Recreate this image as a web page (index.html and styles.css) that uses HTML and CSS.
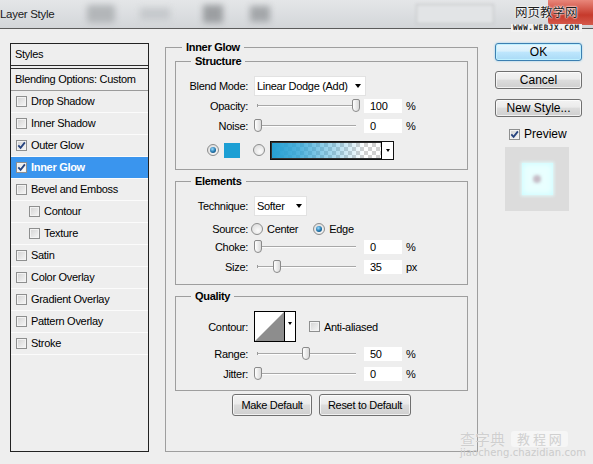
FILE: index.html
```html
<!DOCTYPE html>
<html>
<head>
<meta charset="utf-8">
<title>Layer Style</title>
<link rel="stylesheet" href="styles.css">
</head>
<body>
<div class="titlebar">
  <span class="title">Layer Style</span>
  <span class="blob b1"></span>
  <span class="blob b2"></span>
  <span class="blob b3"></span>
  <span class="blob b4"></span>
  <span class="blob b5"></span>
  <span class="close"></span>
</div>
<div class="wm-top"><span class="wm-cn">网页教学网</span><span class="wm-url">WWW.WEBJX.COM</span></div>

<div class="content">
  <div class="styles-panel">
    <div class="sp-head">Styles</div>
    <div class="sp-blend">Blending Options: Custom</div>
    <div class="sp-row"><span class="cb"></span>Drop Shadow</div>
    <div class="sp-row"><span class="cb"></span>Inner Shadow</div>
    <div class="sp-row"><span class="cb"><svg viewBox="0 0 9 9" width="9" height="9"><path d="M1.3 4.3 L3.6 6.9 L7.9 1.4" stroke="#27447f" stroke-width="1.8" fill="none"/></svg></span>Outer Glow</div>
    <div class="sp-row sel"><span class="cb"><svg viewBox="0 0 9 9" width="9" height="9"><path d="M1.3 4.3 L3.6 6.9 L7.9 1.4" stroke="#27447f" stroke-width="1.8" fill="none"/></svg></span>Inner Glow</div>
    <div class="sp-row"><span class="cb"></span>Bevel and Emboss</div>
    <div class="sp-row sub"><span class="cb"></span>Contour</div>
    <div class="sp-row sub"><span class="cb"></span>Texture</div>
    <div class="sp-row"><span class="cb"></span>Satin</div>
    <div class="sp-row"><span class="cb"></span>Color Overlay</div>
    <div class="sp-row"><span class="cb"></span>Gradient Overlay</div>
    <div class="sp-row"><span class="cb"></span>Pattern Overlay</div>
    <div class="sp-row"><span class="cb"></span>Stroke</div>
  </div>

  <fieldset class="grp outer">
    <legend>Inner Glow</legend>

    <fieldset class="grp structure">
      <legend>Structure</legend>
      <div class="row">
        <span class="lbl">Blend Mode:</span>
        <div class="select w-blend">Linear Dodge (Add)<span class="arrow"></span></div>
      </div>
      <div class="row">
        <span class="lbl">Opacity:</span>
        <div class="slider"><span class="thumb" style="left:98px"></span></div>
        <div class="num">100</div><span class="unit">%</span>
      </div>
      <div class="row">
        <span class="lbl">Noise:</span>
        <div class="slider"><span class="thumb" style="left:0px"></span></div>
        <div class="num">0</div><span class="unit">%</span>
      </div>
      <div class="row color-row">
        <span class="rb on"></span>
        <span class="swatch"></span>
        <span class="rb rb2"></span>
        <div class="grad"><span class="grad-fill"></span><span class="grad-drop"><span class="arrow small"></span></span></div>
      </div>
    </fieldset>

    <fieldset class="grp elements">
      <legend>Elements</legend>
      <div class="row">
        <span class="lbl">Technique:</span>
        <div class="select w-tech">Softer<span class="arrow"></span></div>
      </div>
      <div class="row src-row">
        <span class="lbl tight">Source:</span>
        <span class="rb"></span><span class="opt opt-center">Center</span>
        <span class="rb on"></span><span class="opt">Edge</span>
      </div>
      <div class="row">
        <span class="lbl">Choke:</span>
        <div class="slider"><span class="thumb" style="left:0px"></span></div>
        <div class="num">0</div><span class="unit">%</span>
      </div>
      <div class="row">
        <span class="lbl">Size:</span>
        <div class="slider"><span class="thumb" style="left:19px"></span></div>
        <div class="num">35</div><span class="unit">px</span>
      </div>
    </fieldset>

    <fieldset class="grp quality">
      <legend>Quality</legend>
      <div class="row contour-row">
        <span class="lbl">Contour:</span>
        <div class="contour">
          <svg class="curve" viewBox="0 0 29 29" width="29" height="29"><polygon points="0,29 29,0 29,29" fill="#8d8d8d"/></svg>
          <span class="contour-drop"><span class="arrow tiny"></span></span>
        </div>
        <span class="cb aa"></span><span>Anti-aliased</span>
      </div>
      <div class="row">
        <span class="lbl">Range:</span>
        <div class="slider"><span class="thumb" style="left:48px"></span></div>
        <div class="num">50</div><span class="unit">%</span>
      </div>
      <div class="row">
        <span class="lbl">Jitter:</span>
        <div class="slider"><span class="thumb" style="left:0px"></span></div>
        <div class="num">0</div><span class="unit">%</span>
      </div>
    </fieldset>

    <div class="btn-row">
      <div class="pbtn w-make">Make Default</div>
      <div class="pbtn w-reset">Reset to Default</div>
    </div>
  </fieldset>

  <div class="side">
    <div class="sbtn ok">OK</div>
    <div class="sbtn">Cancel</div>
    <div class="sbtn">New Style...</div>
    <div class="preview-row"><span class="cb"><svg viewBox="0 0 9 9" width="9" height="9"><path d="M1.3 4.3 L3.6 6.9 L7.9 1.4" stroke="#27447f" stroke-width="1.8" fill="none"/></svg></span>Preview</div>
    <div class="preview"><div class="pv-square"><span class="pv-dot"></span></div></div>
  </div>
</div>

<div class="wm-bottom">
  <div class="wm-b1"><span class="wm-czd">查字典</span><span class="wm-jc">教 程 网</span></div>
  <div class="wm-b2">jiaocheng.chazidian.com</div>
</div>
</body>
</html>
```

FILE: styles.css
```css
* { box-sizing: border-box; }
html, body { margin: 0; padding: 0; }
body {
  width: 593px;
  height: 464px;
  overflow: hidden;
  position: relative;
  background: #eeeeee;
  font-family: "Liberation Sans", Arial, sans-serif;
  font-size: 11px;
  letter-spacing: -0.3px;
  color: #000;
}

/* ---------- title bar ---------- */
.titlebar {
  height: 29px;
  border-bottom: 1px solid #5b5b5b;
  background: linear-gradient(#e4e6e8, #d3d6d9);
  display: flex;
  align-items: center;
}
.title {
  font-size: 11.5px;
  color: #1b1b1b;
  width: 52px;
  flex: none;
  white-space: nowrap;
}
.blob { flex: none; filter: blur(3px); }
.b1 { width: 28px; height: 18px; margin-left: 35px; background: #b3b6b9; border-radius: 3px; }
.b2 { width: 30px; height: 12px; margin-left: 25px; background: #c6c9cc; }
.b3 { width: 20px; height: 18px; margin-left: 33px; background: #9c9fa2; }
.b4 { width: 20px; height: 16px; margin-left: 27px; background: #a4a7aa; }
.b5 { width: 78px; height: 20px; margin-left: 146px; background: #e2e4e6; border: 1px solid #c0c2c4; filter: blur(1.5px); }
.close {
  width: 45px;
  height: 25px;
  margin-left: auto;
  align-self: flex-start;
  background: linear-gradient(#e8867a, #c63a2c 60%, #d55a4c);
  border-radius: 0 0 0 4px;
}

.wm-top {
  position: absolute;
  left: 511px;
  top: 3px;
  display: flex;
  flex-direction: column;
  align-items: center;
}
.wm-cn {
  font-family: "Noto Sans CJK SC", sans-serif;
  font-size: 12.5px;
  line-height: 17px;
  letter-spacing: 0;
  color: #1c1c1c;
  text-shadow: 0 0 1px #fff, 0 0 2px #fff, 0 0 2px #fff;
}
.wm-url {
  margin-top: 4px;
  background: #f2f2f2;
  font-family: "DejaVu Sans Mono", monospace;
  font-size: 7.5px;
  font-weight: bold;
  letter-spacing: 0.6px;
  line-height: 8px;
  padding: 0 2px;
  color: #222;
}

/* ---------- content ---------- */
.content {
  display: flex;
  align-items: flex-start;
  padding-left: 10px;
}

/* styles list */
.styles-panel {
  width: 139px;
  height: 409px;
  margin-top: 14px;
  border: 1px solid #222;
  flex: none;
}
.sp-head {
  height: 22px;
  line-height: 21px;
  padding-left: 4px;
  border-bottom: 1px solid #2c2c2c;
}
.sp-blend {
  margin-top: 2px;
  height: 23px;
  line-height: 21px;
  padding-left: 4px;
  border-top: 1px solid #2c2c2c;
  border-bottom: 1px solid #9a9a9a;
}
.sp-row {
  height: 22px;
  border-bottom: 1px solid #fbfbfb;
  display: flex;
  align-items: center;
  padding-left: 5px;
  padding-bottom: 1px;
}
.sp-row.sub { padding-left: 18px; }
.sp-row.sel {
  background: #3a95ee;
  color: #fff;
  font-weight: bold;
}

.cb {
  width: 11px;
  height: 11px;
  flex: none;
  margin-right: 4px;
  border: 1px solid #8e8f8f;
  background: linear-gradient(135deg, #d2d2d2, #f7f7f7);
  box-shadow: inset 0 0 0 1px #f3f3f3;
}
.cb svg { display: block; }
.sel .cb { background: linear-gradient(135deg, #e6e6e6, #ffffff); }

/* group boxes */
fieldset.grp {
  margin: 0;
  min-width: 0;
  padding: 0;
  border: 1px solid #9e9e9e;
}
.grp > legend {
  padding: 0 4px;
  margin-left: 15px;
  font-weight: bold;
  line-height: 13px;
  height: 13px;
}
fieldset.outer {
  width: 313px;
  flex: none;
  margin: 12px 0 0 16px;
  padding: 1px 9px 35px;
}
fieldset.outer > legend { margin-left: 7px; }
fieldset.structure { padding: 8px 0 9px; }
fieldset.elements { margin-top: 5px; padding: 8px 0 7px; }
fieldset.quality { margin-top: 5px; padding: 8px 0 6px; }

.row {
  display: flex;
  align-items: center;
  height: 20px;
}
.lbl {
  width: 72px;
  flex: none;
  text-align: right;
  margin-right: 6px;
}
.lbl.tight { margin-right: 3px; }

.select {
  height: 20px;
  background: #fff;
  border: 1px solid #e2e2e2;
  display: flex;
  align-items: center;
  padding-left: 2px;
  flex: none;
}
.w-blend { width: 112px; }
.w-tech { width: 53px; }
.arrow {
  width: 0;
  height: 0;
  border-left: 3.5px solid transparent;
  border-right: 3.5px solid transparent;
  border-top: 4px solid #000;
  margin-left: auto;
  margin-right: 4px;
}
.arrow.small {
  margin: 0;
  border-left-width: 2.5px;
  border-right-width: 2.5px;
  border-top-width: 3px;
}
.arrow.tiny {
  margin: 10px 0 0 0;
  border-left-width: 2.5px;
  border-right-width: 2.5px;
  border-top-width: 3px;
}

.slider {
  position: relative;
  width: 106px;
  height: 14px;
  flex: none;
  margin-right: 4px;
}
.slider::before {
  content: "";
  position: absolute;
  left: 3px;
  right: 4px;
  top: 6px;
  height: 1px;
  background: #a8a8a8;
  box-shadow: 0 1px 0 #fdfdfd;
}
.slider::after {
  content: "";
  position: absolute;
  left: 3px;
  top: 5px;
  width: 1px;
  height: 3px;
  background: #9a9a9a;
}
.thumb {
  position: absolute;
  top: 0;
  width: 8px;
  height: 13px;
  border: 1px solid #8a8a8a;
  border-radius: 2px 2px 4px 4px;
  background: linear-gradient(90deg, #ffffff, #d9d9d9);
  z-index: 1;
}
.num {
  width: 38px;
  height: 14px;
  line-height: 14px;
  background: #fff;
  padding-left: 6px;
  flex: none;
  margin-right: 4px;
}

.color-row { margin-top: 4px; padding-left: 31px; }
.rb {
  width: 12px;
  height: 12px;
  flex: none;
  border-radius: 50%;
  border: 1px solid #8c8d8d;
  background: radial-gradient(circle at 60% 65%, #fbfbfb, #d6d6d6);
  display: flex;
  align-items: center;
  justify-content: center;
}
.rb.on::after {
  content: "";
  width: 6px;
  height: 6px;
  border-radius: 50%;
  background: radial-gradient(circle at 40% 35%, #9adcff, #1f74ab 55%, #0e3a5c);
}
.swatch {
  width: 16px;
  height: 15px;
  margin: 0 13px 0 5px;
  background: #1c9fd4;
  flex: none;
}
.grad {
  width: 124px;
  height: 19px;
  margin-left: 5px;
  border: 1px solid #111;
  display: flex;
  flex: none;
  background: #fff;
}
.grad-fill {
  flex: 1;
  border: 1px solid #333;
  border-right: none;
  background:
    linear-gradient(90deg, #26a0d4 0%, rgba(38,160,212,0.8) 25%, rgba(38,160,212,0.35) 60%, rgba(38,160,212,0) 85%),
    repeating-conic-gradient(#d2d2d2 0 25%, #ffffff 0 50%) 0 0 / 8px 8px;
}
.grad-drop {
  width: 12px;
  border-left: 1px solid #000;
  display: flex;
  align-items: center;
  justify-content: center;
  flex: none;
}

.src-row { margin-top: 4px; height: 17px; }
.opt { margin-left: 4px; }
.opt-center { margin-right: 15px; }

.contour-row { height: 31px; }
.contour {
  width: 42px;
  height: 31px;
  border: 1px solid #000;
  display: flex;
  flex: none;
  background: #fff;
  margin-right: 13px;
}
.curve { display: block; flex: none; }
.contour-drop {
  flex: 1;
  border-left: 1px solid #000;
  display: flex;
  justify-content: center;
  align-items: flex-start;
}
.quality .contour-row + .row { margin-top: 2px; }

.btn-row {
  display: flex;
  justify-content: center;
  gap: 7px;
  margin-top: 3px;
}
.pbtn {
  height: 22px;
  border: 1px solid #707070;
  border-radius: 3px;
  background: linear-gradient(#f3f3f3, #ebebeb 45%, #dcdcdc 50%, #cfcfcf);
  box-shadow: inset 0 0 0 1px rgba(255,255,255,0.7);
  display: flex;
  align-items: center;
  justify-content: center;
}
.w-make { width: 80px; }
.w-reset { width: 92px; }

/* right column */
.side {
  width: 87px;
  flex: none;
  margin: 14px 0 0 17px;
  display: flex;
  flex-direction: column;
}
.sbtn {
  height: 18px;
  margin-bottom: 10px;
  border: 1px solid #707070;
  border-radius: 3px;
  background: linear-gradient(#f3f3f3, #ebebeb 45%, #dcdcdc 50%, #cfcfcf);
  box-shadow: inset 0 0 0 1px rgba(255,255,255,0.7);
  display: flex;
  align-items: center;
  justify-content: center;
  font-size: 12px;
  letter-spacing: 0;
}
.sbtn.ok {
  border-color: #3c7fb1;
  background: linear-gradient(#e8f6fd, #d9f0fc 45%, #bee6fd 50%, #a9dbf6);
  box-shadow: inset 0 0 0 1px #bff0ff, 0 0 2px #7ec9ee;
}
.preview-row {
  display: flex;
  align-items: center;
  height: 14px;
  padding-left: 14px;
  font-size: 12px;
  letter-spacing: 0;
}
.preview {
  width: 64px;
  height: 64px;
  margin: 6px 0 0 10px;
  background: #dcdcdc;
  display: flex;
  align-items: center;
  justify-content: center;
}
.pv-square {
  width: 31px;
  height: 32px;
  background: #e9ffff;
  box-shadow: 0 0 3px 1px #e0fbfb, inset 0 0 6px #c6fbff;
  display: flex;
  align-items: center;
  justify-content: center;
}
.pv-dot {
  width: 8px;
  height: 8px;
  border-radius: 50%;
  background: #c5bcc6;
  filter: blur(1.5px);
}

/* bottom watermark */
.wm-bottom {
  position: absolute;
  left: 460px;
  top: 430px;
  letter-spacing: 0;
}
.wm-b1 { display: flex; align-items: center; }
.wm-czd {
  font-family: "Noto Sans CJK SC", sans-serif;
  font-size: 15px;
  line-height: 17px;
  color: #cfcfcf;
  text-shadow: 0 0 1px #fff;
}
.wm-jc {
  margin-left: 6px;
  padding: 0 6px;
  border-radius: 3px;
  background: #f6f6f6;
  font-family: "Noto Sans CJK SC", sans-serif;
  font-size: 13px;
  line-height: 16px;
  color: #d0d0d0;
}
.wm-b2 {
  font-family: "DejaVu Sans", sans-serif;
  font-size: 10px;
  line-height: 11px;
  color: #cbcbcb;
  letter-spacing: 0.1px;
}
```
